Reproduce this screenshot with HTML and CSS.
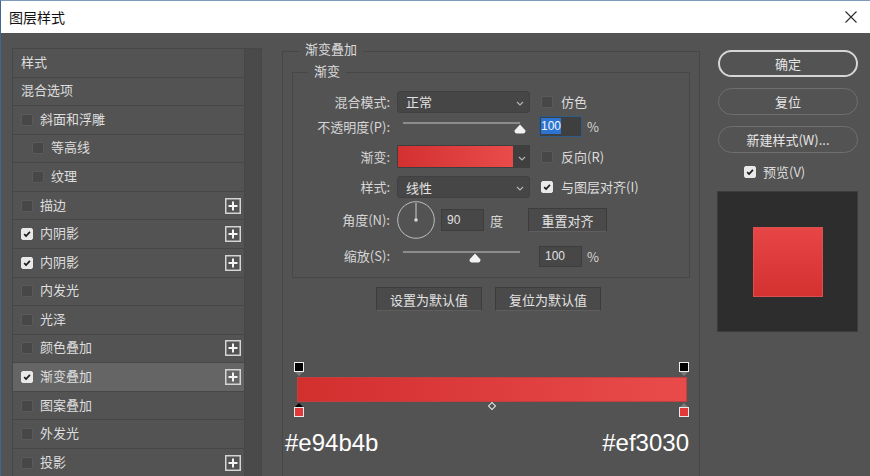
FILE: index.html
```html
<!DOCTYPE html>
<html>
<head>
  <title>图层样式</title>
  <meta charset="UTF-8">
  <link rel="stylesheet" href="styles.css">
</head>
<body>
  <div class="window">
    <div class="titlebar">
      <span class="title">图层样式</span>
      <svg class="close" viewBox="0 0 12 12"><path d="M0.5 0.5l11 11M11.5 0.5l-11 11" stroke="#2b2b2b" stroke-width="1.1"/></svg>
    </div>

    <div class="main">
      <div class="styles-panel">
        <ul class="style-list">
          <li class="style-row">样式</li>
          <li class="style-row">混合选项</li>
          <li class="style-row"><span class="cb"></span>斜面和浮雕</li>
          <li class="style-row sub"><span class="cb"></span>等高线</li>
          <li class="style-row sub"><span class="cb"></span>纹理</li>
          <li class="style-row"><span class="cb"></span>描边<svg class="add" viewBox="0 0 16 16"><rect x="0.75" y="0.75" width="14.5" height="14.5" fill="none" stroke="#d4d4d4" stroke-width="1.5"/><path d="M8 3.5v9M3.5 8h9" stroke="#f4f4f4" stroke-width="2"/></svg></li>
          <li class="style-row"><span class="cb on"><svg viewBox="0 0 12 12"><path d="M2.6 6.1l2.3 2.4 4.6-5" fill="none" stroke="#1c1c1c" stroke-width="2"/></svg></span>内阴影<svg class="add" viewBox="0 0 16 16"><rect x="0.75" y="0.75" width="14.5" height="14.5" fill="none" stroke="#d4d4d4" stroke-width="1.5"/><path d="M8 3.5v9M3.5 8h9" stroke="#f4f4f4" stroke-width="2"/></svg></li>
          <li class="style-row"><span class="cb on"><svg viewBox="0 0 12 12"><path d="M2.6 6.1l2.3 2.4 4.6-5" fill="none" stroke="#1c1c1c" stroke-width="2"/></svg></span>内阴影<svg class="add" viewBox="0 0 16 16"><rect x="0.75" y="0.75" width="14.5" height="14.5" fill="none" stroke="#d4d4d4" stroke-width="1.5"/><path d="M8 3.5v9M3.5 8h9" stroke="#f4f4f4" stroke-width="2"/></svg></li>
          <li class="style-row"><span class="cb"></span>内发光</li>
          <li class="style-row"><span class="cb"></span>光泽</li>
          <li class="style-row"><span class="cb"></span>颜色叠加<svg class="add" viewBox="0 0 16 16"><rect x="0.75" y="0.75" width="14.5" height="14.5" fill="none" stroke="#d4d4d4" stroke-width="1.5"/><path d="M8 3.5v9M3.5 8h9" stroke="#f4f4f4" stroke-width="2"/></svg></li>
          <li class="style-row selected"><span class="cb on"><svg viewBox="0 0 12 12"><path d="M2.6 6.1l2.3 2.4 4.6-5" fill="none" stroke="#1c1c1c" stroke-width="2"/></svg></span>渐变叠加<svg class="add" viewBox="0 0 16 16"><rect x="0.75" y="0.75" width="14.5" height="14.5" fill="none" stroke="#d4d4d4" stroke-width="1.5"/><path d="M8 3.5v9M3.5 8h9" stroke="#f4f4f4" stroke-width="2"/></svg></li>
          <li class="style-row"><span class="cb"></span>图案叠加</li>
          <li class="style-row"><span class="cb"></span>外发光</li>
          <li class="style-row"><span class="cb"></span>投影<svg class="add" viewBox="0 0 16 16"><rect x="0.75" y="0.75" width="14.5" height="14.5" fill="none" stroke="#d4d4d4" stroke-width="1.5"/><path d="M8 3.5v9M3.5 8h9" stroke="#f4f4f4" stroke-width="2"/></svg></li>
        </ul>
        <div class="scrollbar"></div>
      </div>

      <fieldset class="effect">
        <legend>渐变叠加</legend>
        <fieldset class="gradient-set">
          <legend>渐变</legend>

          <div class="field r1">
            <span class="field-label">混合模式:</span>
            <div class="select"><span>正常</span><svg class="chev" viewBox="0 0 8 5"><path d="M1 1l3 3 3-3" fill="none" stroke="#b8b8b8" stroke-width="1.1"/></svg></div>
            <span class="cb gap"></span><span class="cb-label">仿色</span>
          </div>

          <div class="field r2">
            <span class="field-label">不透明度(P):</span>
            <div class="slider"><div class="track"></div><svg class="thumb thumb-max" viewBox="0 0 12 10"><path d="M6 0.5L11.5 6.5Q11.5 9.5 9 9.5H3Q0.5 9.5 0.5 6.5Z" fill="#f2f2f2"/></svg></div>
            <div class="num focused"><span class="sel">100</span></div>
            <span class="unit">%</span>
          </div>

          <div class="field r3">
            <span class="field-label">渐变:</span>
            <div class="swatch"></div>
            <div class="swatch-drop"><svg class="chev" viewBox="0 0 8 5"><path d="M1 1l3 3 3-3" fill="none" stroke="#b8b8b8" stroke-width="1.1"/></svg></div>
            <span class="cb gap"></span><span class="cb-label">反向(R)</span>
          </div>

          <div class="field r4">
            <span class="field-label">样式:</span>
            <div class="select"><span>线性</span><svg class="chev" viewBox="0 0 8 5"><path d="M1 1l3 3 3-3" fill="none" stroke="#b8b8b8" stroke-width="1.1"/></svg></div>
            <span class="cb on gap"><svg viewBox="0 0 12 12"><path d="M2.6 6.1l2.3 2.4 4.6-5" fill="none" stroke="#1c1c1c" stroke-width="2"/></svg></span><span class="cb-label">与图层对齐(I)</span>
          </div>

          <div class="field r5">
            <span class="field-label">角度(N):</span>
            <svg class="dial" viewBox="0 0 38 38"><circle cx="19" cy="19" r="18.3" fill="none" stroke="#bdbdbd" stroke-width="1"/><path d="M19 19V2" stroke="#cfcfcf" stroke-width="1"/><circle cx="19" cy="19" r="1.8" fill="#d8d8d8"/></svg>
            <div class="num angle">90</div>
            <span class="unit">度</span>
            <button class="flat-btn reset-align">重置对齐</button>
          </div>

          <div class="field r6">
            <span class="field-label">缩放(S):</span>
            <div class="slider"><div class="track"></div><svg class="thumb thumb-mid" viewBox="0 0 12 10"><path d="M6 0.5L11.5 6.5Q11.5 9.5 9 9.5H3Q0.5 9.5 0.5 6.5Z" fill="#f2f2f2"/></svg></div>
            <div class="num">100</div>
            <span class="unit">%</span>
          </div>
        </fieldset>

        <div class="default-btns">
          <button class="flat-btn">设置为默认值</button>
          <button class="flat-btn">复位为默认值</button>
        </div>

        <div class="grad-editor">
          <div class="stops top-stops">
            <div class="stop"><span class="stop-box opacity"></span><span class="tri-down"></span></div>
            <div class="stop"><span class="stop-box opacity"></span><span class="tri-down"></span></div>
          </div>
          <div class="grad-bar"></div>
          <div class="stops bottom-stops">
            <div class="stop"><span class="tri-up active"></span><span class="stop-box color"></span></div>
            <span class="midpoint"></span>
            <div class="stop"><span class="tri-up"></span><span class="stop-box color"></span></div>
          </div>
        </div>

        <div class="hex-row">
          <span>#e94b4b</span>
          <span>#ef3030</span>
        </div>
      </fieldset>

      <div class="side">
        <button class="pill primary">确定</button>
        <button class="pill">复位</button>
        <button class="pill">新建样式(W)...</button>
        <div class="preview-check">
          <span class="cb on"><svg viewBox="0 0 12 12"><path d="M2.6 6.1l2.3 2.4 4.6-5" fill="none" stroke="#1c1c1c" stroke-width="2"/></svg></span><span class="cb-label">预览(V)</span>
        </div>
        <div class="preview">
          <div class="preview-square"></div>
        </div>
      </div>
    </div>
  </div>
</body>
</html>
```

FILE: styles.css
```css
* {
  box-sizing: border-box;
}
body {
  margin: 0;
  background: #535353;
  font-family: "Noto Sans CJK SC", "Liberation Sans", sans-serif;
  font-size: 13px;
  color: #dcdcdc;
}
.window {
  width: 870px;
  height: 476px;
  overflow: hidden;
  display: flex;
  flex-direction: column;
  border-left: 1px solid #3f6790;
  border-top: 1px solid #7d9bbb;
}
.titlebar {
  height: 32px;
  flex: none;
  background: #fff;
  display: flex;
  align-items: center;
  justify-content: space-between;
  padding: 0 13px 0 8px;
}
.title {
  font-size: 14px;
  color: #111;
  line-height: 20px;
}
.close {
  width: 12px;
  height: 12px;
}
.main {
  flex: 1;
  display: flex;
  align-items: flex-start;
  overflow: hidden;
}

/* left list */
.styles-panel {
  margin: 15px 0 0 11px;
  width: 250px;
  height: 440px;
  flex: none;
  border: 1px solid #474747;
  display: flex;
}
.style-list {
  list-style: none;
  margin: 0;
  padding: 0;
  width: 231px;
}
.style-row {
  height: 28.57px;
  border-bottom: 1px solid #474747;
  display: flex;
  align-items: center;
  padding: 0 3px 2px 8px;
  color: #dedede;
  line-height: 18px;
}
.style-row .cb,
.style-row .add {
  margin-top: 2px;
}
.style-row.sub {
  padding-left: 19px;
}
.style-row.selected {
  background: #656565;
}
.scrollbar {
  flex: 1;
  background: #4a4a4a;
  border-left: 1px solid #464646;
}
.cb {
  width: 12px;
  height: 12px;
  flex: none;
  border-radius: 2px;
  background: #474747;
  border: 1px solid #5a5a5a;
  margin-right: 7px;
  display: inline-flex;
}
.cb.on {
  background: #e9e9e9;
  border-color: #e9e9e9;
}
.cb svg {
  width: 10px;
  height: 10px;
}
.add {
  width: 16px;
  height: 16px;
  margin-left: auto;
}

/* center */
.effect {
  margin: 7px 0 0 20px;
  width: 418px;
  height: 460px;
  flex: none;
  min-width: 0;
  border: 1px solid #474747;
  padding: 0 9px;
}
.effect > legend {
  margin-left: 7px;
  padding: 0 6px 4px;
  line-height: 18px;
}
.gradient-set {
  margin: 0;
  min-width: 0;
  border: 1px solid #474747;
  padding: 7px 0 9px 0;
}
.gradient-set > legend {
  margin-left: 15px;
  padding: 0 6px 3px;
  line-height: 18px;
}
.field {
  display: flex;
  align-items: center;
}
.field-label {
  width: 97px;
  margin-right: 7px;
  text-align: right;
  color: #d6d6d6;
  line-height: 18px;
}
.r1 { height: 23px; }
.r2 { height: 27px; }
.r3 { height: 25px; margin-top: 4px; }
.r4 { height: 24px; margin-top: 6px; }
.r5 { height: 38px; margin-top: 2px; }
.r6 { height: 24px; margin-top: 5px; }

.select {
  width: 133px;
  height: 22px;
  background: #464646;
  border: 1px solid #404040;
  border-radius: 3px;
  display: flex;
  align-items: center;
  justify-content: space-between;
  padding: 0 5px 0 8px;
  color: #e2e2e2;
}
.chev {
  width: 8px;
  height: 5px;
  margin-top: 3px;
}
.cb.gap {
  margin-left: 11px;
  margin-right: 8px;
}
.cb-label {
  color: #dcdcdc;
  line-height: 18px;
}
.slider {
  width: 133px;
  height: 20px;
  position: relative;
}
.track {
  position: absolute;
  left: 6px;
  right: 10px;
  top: 5px;
  height: 2px;
  background: #8c8c8c;
}
.thumb {
  position: absolute;
  top: 7px;
  width: 12px;
  height: 10px;
}
.thumb-max { left: 117px; }
.thumb-mid { left: 72px; }
.num {
  width: 43px;
  height: 21px;
  margin-left: 9px;
  background: #474747;
  border: 1px solid #3d3d3d;
  font-family: "Liberation Sans", sans-serif;
  font-size: 12px;
  line-height: 19px;
  padding-left: 5px;
  color: #e0e0e0;
}
.num.focused {
  border-color: #2d5a86;
  background: #3f3f3f;
  padding-left: 1px;
}
.sel {
  background: #2d74d2;
  color: #f2f7ff;
  padding: 1px 0;
}
.unit {
  margin-left: 5px;
  color: #d6d6d6;
}
.swatch {
  width: 117px;
  height: 23px;
  background: linear-gradient(to right, #d33131, #e94b4b);
  border: 1px solid #3e3e3e;
}
.swatch-drop {
  width: 16px;
  height: 23px;
  background: #3f3f3f;
  display: flex;
  align-items: center;
  justify-content: center;
}
.dial {
  width: 38px;
  height: 38px;
}
.num.angle {
  height: 22px;
  margin-left: 6px;
  line-height: 20px;
}
.r5 .unit {
  margin-left: 6px;
}
.flat-btn {
  height: 24px;
  background: #4a4a4a;
  border: 1px solid #3c3c3c;
  border-bottom-color: #5e5e5e;
  color: #e2e2e2;
  font-family: "Noto Sans CJK SC", sans-serif;
  font-size: 13px;
  padding: 0;
}
.reset-align {
  width: 79px;
  margin-left: 25px;
}
.default-btns {
  display: flex;
  justify-content: center;
  gap: 13px;
  margin-top: 9px;
  padding-right: 5px;
}
.default-btns .flat-btn {
  width: 106px;
}

/* gradient editor */
.grad-editor {
  margin-top: 51px;
}
.stops {
  display: flex;
  justify-content: space-between;
  margin: 0 1px 0 2px;
}
.stop {
  width: 10px;
  display: flex;
  flex-direction: column;
  align-items: center;
}
.stop-box {
  width: 10px;
  height: 10px;
  border: 1px solid #f0f0f0;
}
.stop-box.opacity {
  background: #000;
}
.stop-box.color {
  background: #e23a3a;
  border-color: #eaeaea;
}
.tri-down {
  width: 0;
  height: 0;
  border-left: 4px solid transparent;
  border-right: 4px solid transparent;
  border-top: 4px solid #7a7a7a;
}
.tri-up {
  width: 0;
  height: 0;
  margin-top: 1px;
  border-left: 4px solid transparent;
  border-right: 4px solid transparent;
  border-bottom: 4px solid #7a7a7a;
}
.tri-up.active {
  border-bottom-color: #000;
}
.grad-bar {
  height: 25px;
  margin: 1px 3px 0 5px;
  background: linear-gradient(to right, #d22f2f, #e94b4b);
  border: 1px solid #c04040;
}
.midpoint {
  width: 6px;
  height: 6px;
  margin-top: 1px;
  border: 1px solid #e8e8e8;
  transform: rotate(45deg);
}
.hex-row {
  display: flex;
  justify-content: space-between;
  margin: 12px 1px 0 -7px;
  font-family: "Liberation Sans", sans-serif;
  font-size: 24px;
  line-height: 28px;
  color: #fff;
}

/* right column */
.side {
  margin-left: 17px;
  width: 141px;
  flex: none;
  padding-top: 17px;
}
.pill {
  display: block;
  width: 140px;
  height: 27px;
  margin: 0 0 11px 1px;
  border-radius: 14px;
  background: transparent;
  border: 1px solid #6f6f6f;
  color: #e6e6e6;
  font-family: "Noto Sans CJK SC", sans-serif;
  font-size: 13px;
  padding: 0;
}
.pill.primary {
  border: 2px solid #d6d6d6;
}
.preview-check {
  display: flex;
  align-items: center;
  height: 20px;
  margin-top: -2px;
  padding-left: 27px;
}
.preview {
  margin-top: 9px;
  width: 141px;
  height: 141px;
  background: #2d2d2d;
  border: 1px solid #3c3c3c;
  display: flex;
  align-items: center;
  justify-content: center;
}
.preview-square {
  width: 70px;
  height: 70px;
  background: linear-gradient(to bottom, #e74646, #d43131);
  border: 1px solid #d95050;
}
```
